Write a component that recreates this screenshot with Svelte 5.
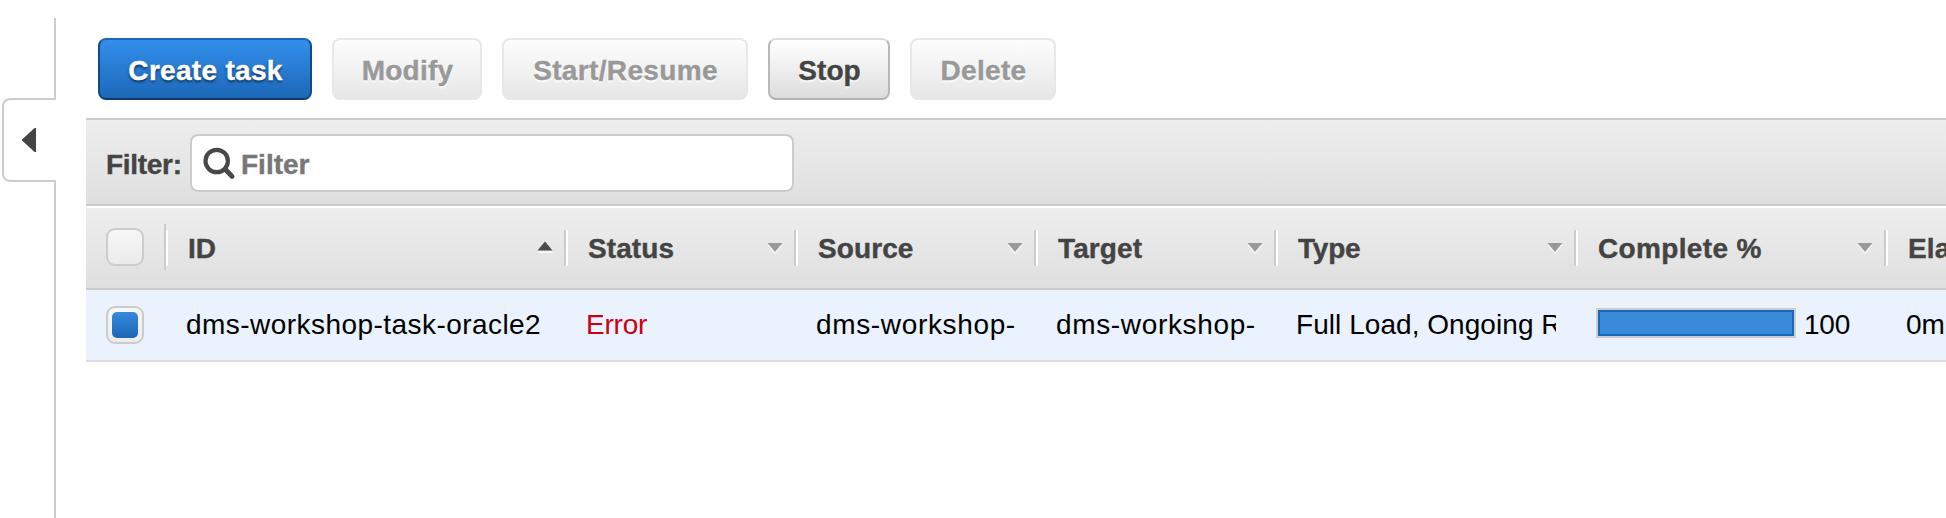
<script>
  const buttons = [
    { label: 'Create task', kind: 'primary', width: 214, ls: 0.3 },
    { label: 'Modify', kind: 'disabled', width: 150, ls: 0.2 },
    { label: 'Start/Resume', kind: 'disabled', width: 246, ls: 0.35 },
    { label: 'Stop', kind: 'normal', width: 122, ls: 0.1 },
    { label: 'Delete', kind: 'disabled', width: 146, ls: 0.3 }
  ];

  const columns = [
    { label: 'ID', value: 'dms-workshop-task-oracle2', sort: 'up', hls: 0, ls: 0.45 },
    { label: 'Status', value: 'Error', sort: 'down', error: true, hls: 0.1, ls: -0.2 },
    { label: 'Source', value: 'dms-workshop-', sort: 'down', hls: 0.1, ls: 0.65 },
    { label: 'Target', value: 'dms-workshop-', sort: 'down', hls: 0.1, ls: 0.65 },
    { label: 'Type', value: 'Full Load, Ongoing Replication', sort: 'down', hls: -0.2, ls: 0.05 },
    { label: 'Complete %', value: '100', sort: 'down', progress: 100, hls: 0.35, ls: -0.2 },
    { label: 'Elapsed Time', value: '0m', sort: null, hls: 0.1, ls: 0 }
  ];
</script>

<div class="page">
  <aside>
    <div class="rail top"></div>
    <button class="collapse" aria-label="Collapse">
      <svg width="14" height="24" viewBox="0 0 14 24"><path d="M12.6 0H14V24H12.6L0 12.6V11.4Z" fill="#444" /></svg>
    </button>
    <div class="rail bottom"></div>
  </aside>

  <main>
    <div class="toolbar">
      {#each buttons as b}
        <button class="btn {b.kind}" style="width:{b.width}px;letter-spacing:{b.ls}px">{b.label}</button>
      {/each}
    </div>

    <div class="filter">
      <span class="flabel">Filter:</span>
      <div class="search">
        <svg width="34" height="34" viewBox="0 0 34 34" fill="none" stroke="#484848">
          <circle cx="14.7" cy="15" r="11.2" stroke-width="4.2" />
          <path d="M23.5 23.5L30 30.4" stroke-width="5" stroke-linecap="round" />
        </svg>
        <span>Filter</span>
      </div>
    </div>

    <div class="grid head">
      <div class="cell check"><i class="box"></i></div>
      {#each columns as c}
        <div class="cell">
          <span class="label" style="letter-spacing:{c.hls}px">{c.label}</span>
          {#if c.sort === 'up'}
            <svg class="arrow" width="16" height="14" viewBox="0 0 16 14"><path d="M0.5 11.5H15.5V13H0.5Z" fill="#fff" opacity=".8" /><path d="M8 1.5L15.5 10.5H0.5Z" fill="#4c4c4c" /></svg>
          {:else if c.sort === 'down'}
            <svg class="arrow" width="16" height="14" viewBox="0 0 16 14"><path d="M0.5 4.8H15.5L8 14Z" fill="#fff" opacity=".8" /><path d="M0.5 3H15.5L8 12Z" fill="#999" /></svg>
          {/if}
        </div>
      {/each}
    </div>

    <div class="grid row">
      <div class="cell check"><i class="box"><b></b></i></div>
      {#each columns as c}
        <div class="cell" class:error={c.error}>
          {#if c.progress}
            <div class="bar"><div style="width:{c.progress}%"></div></div>
          {/if}
          <span class="value" style="letter-spacing:{c.ls}px">{c.value}</span>
        </div>
      {/each}
    </div>
  </main>
</div>

<style>
  :global(body) { background: #fff; overflow: hidden; }
  .page, .page * { box-sizing: border-box; }
  .page {
    display: flex;
    width: 1946px;
    height: 518px;
    overflow: hidden;
    font: 28px/32px "Liberation Sans", Arial, sans-serif;
    color: #000;
  }
  aside {
    flex: none;
    width: 86px;
    padding: 18px 30px 0 2px;
    display: flex;
    flex-direction: column;
  }
  .rail { width: 2px; margin-left: 52px; background: #ccc; }
  .rail.top { height: 81px; }
  .rail.bottom { flex: 1; margin-top: -1px; }
  .collapse {
    display: flex;
    align-items: center;
    width: 54px;
    height: 84px;
    margin-top: -1px;
    padding: 0 0 0 18px;
    background: #fff;
    border: 2px solid #ccc;
    border-right: 0;
    border-radius: 8px 0 0 8px;
  }
  main { flex: 1; min-width: 0; overflow: hidden; }
  .toolbar {
    display: flex;
    gap: 20px;
    height: 118px;
    padding: 38px 0 0 12px;
  }
  .btn {
    height: 62px;
    padding: 3px 0 0 1px;
    font: bold 28px/32px "Liberation Sans", Arial, sans-serif;
    text-align: center;
    white-space: nowrap;
    border: 2px solid;
    border-radius: 8px;
    -webkit-text-stroke: 0.4px;
  }
  .primary {
    color: #fff;
    text-shadow: 0 2px 3px rgba(0, 0, 0, .6);
    background: linear-gradient(#338feb, #1c68b8);
    border-color: #1c68b5 #114a86 #0f3d71;
  }
  .normal {
    color: #444;
    text-shadow: 0 2px 2px #fff;
    background: linear-gradient(#fff, #ddd);
    border-color: #ddd #b8b8b8 #b3b3b3;
  }
  .disabled {
    color: #999;
    text-shadow: 0 2px 2px #fff;
    background: linear-gradient(#fdfdfd, #e7e7e7);
    border-color: #e7e7e7;
  }
  .filter {
    display: flex;
    align-items: center;
    height: 88px;
    padding: 2px 0 0 20px;
    border-top: 2px solid #ccc;
    border-bottom: 2px solid #ccc;
    background: linear-gradient(#eee, #dfdfdf);
    font-weight: bold;
    color: #444;
    -webkit-text-stroke: 0.4px;
  }
  .flabel { width: 84px; padding-top: 3px; letter-spacing: -0.3px; }
  .search {
    display: flex;
    align-items: center;
    width: 604px;
    height: 58px;
    padding-left: 10px;
    background: #fff;
    border: 2px solid #ccc;
    border-radius: 8px;
    color: #777;
  }
  .search span { margin-left: 5px; padding-top: 3px; }
  .grid {
    display: grid;
    grid-template-columns: 80px 400px 230px 240px 240px 300px 310px 240px;
  }
  .cell { display: flex; align-items: center; min-width: 0; white-space: nowrap; overflow: hidden; }
  .head {
    height: 84px;
    border-top: 2px solid #fff;
    border-bottom: 2px solid #ccc;
    background: linear-gradient(#eee, #dfdfdf);
    font-weight: bold;
    color: #444;
    -webkit-text-stroke: 0.4px;
  }
  .head .cell::after {
    content: "";
    flex: none;
    width: 2px;
    height: 36px;
    margin-left: 12px;
    background: #ccc;
  }
  .head .cell::before {
    content: "";
    flex: none;
    width: 2px;
    height: 36px;
    margin-right: 20px;
    background: #fff;
  }
  .head .check::before { margin-right: 18px; background: none; }
  .head .check::after { height: 46px; margin: -2px 0 0 20px; }
  .label { flex: 1; padding-top: 1px; }
  .arrow { flex: none; margin-right: -1px; margin-top: -2px; }
  .box {
    flex: none;
    display: flex;
    align-items: center;
    justify-content: center;
    width: 38px;
    height: 38px;
    margin-top: -2px;
    border: 2px solid #ccc;
    border-radius: 9px;
    background: linear-gradient(#f7f7f7, #ebebeb);
  }
  .box b { width: 26px; height: 26px; border-radius: 5px; background: linear-gradient(#388adb, #1a66b7); }
  .row { height: 72px; background: #eaf2fe; border-bottom: 2px solid #ddd; }
  .row .cell { padding: 0 18px 0 20px; margin-right: 2px; }
  .row .check { padding: 0 0 0 20px; margin: 0; }
  .row .box { margin-top: 0; }
  .value { flex: 1; overflow: hidden; margin-top: -1px; }
  .error { color: #cc0011; }
  .bar {
    flex: none;
    width: 200px;
    height: 30px;
    margin: -4px 8px 0 0;
    border: 2px solid #ccc;
  }
  .bar div { height: 100%; background: #388adb; border: 2px solid #1a66b7; }
</style>
